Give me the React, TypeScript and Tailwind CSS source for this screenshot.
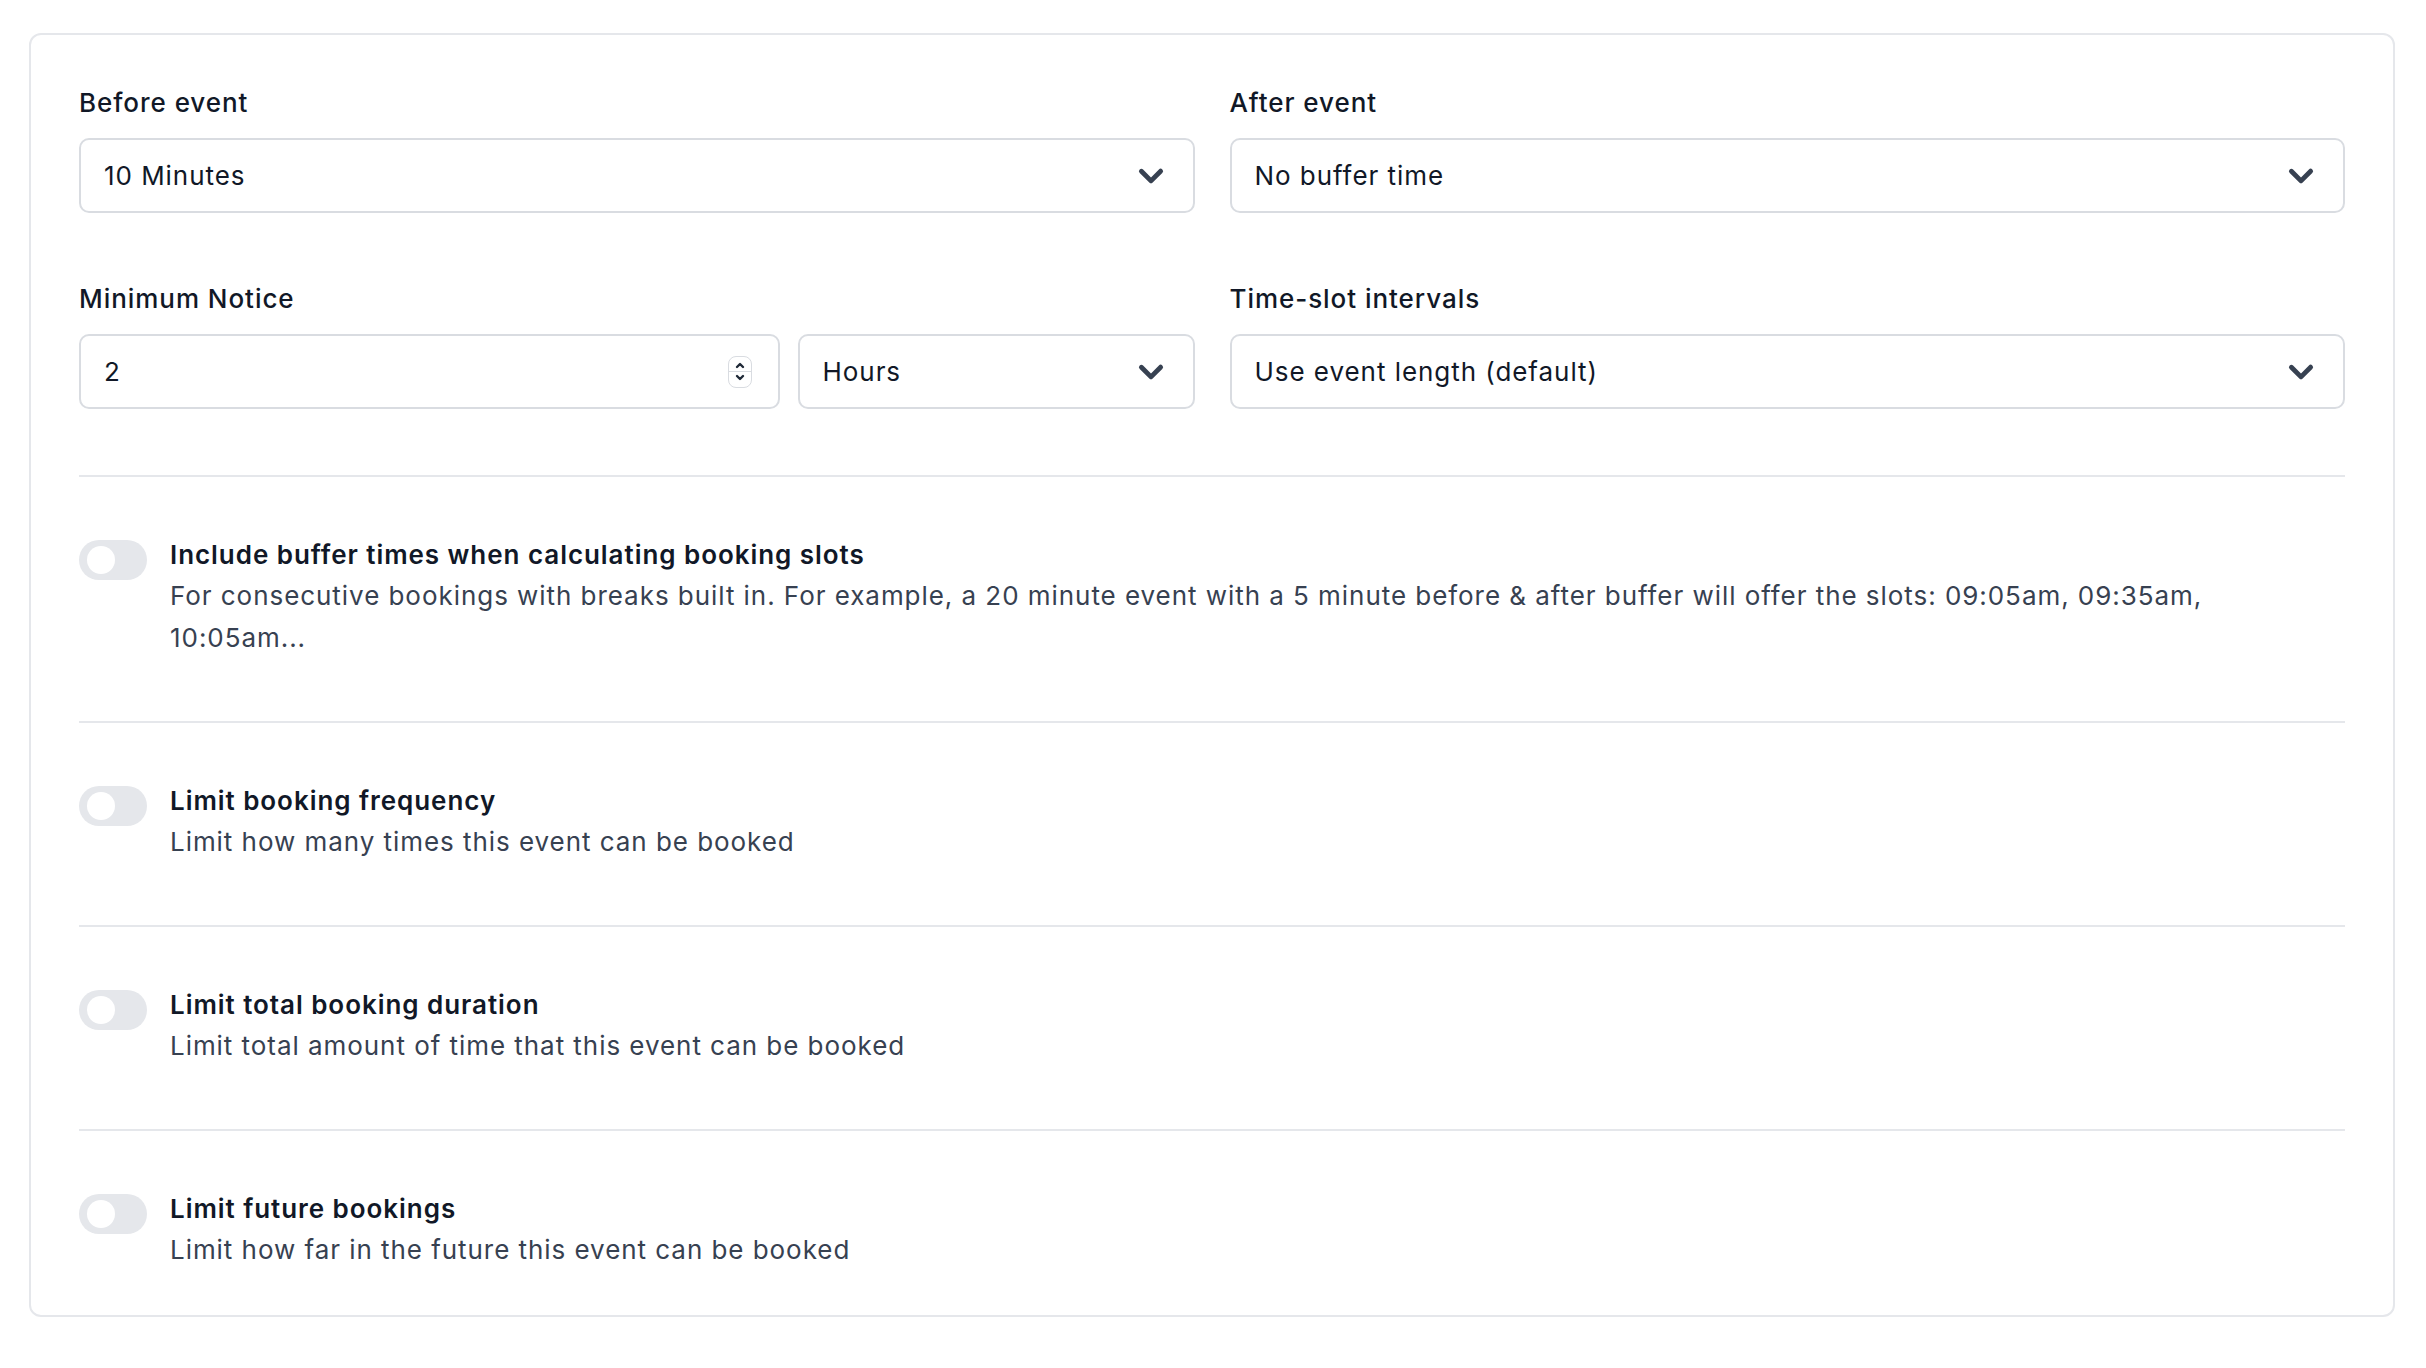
import React from 'react'

const font = { fontFamily: 'Inter, "Noto Sans", sans-serif' }

function Chevron() {
  return (
    <svg width="48" height="48" viewBox="0 0 20 20" fill="#374151" className="shrink-0">
      <path
        fillRule="evenodd"
        d="M5.293 7.293a1 1 0 011.414 0L10 10.586l3.293-3.293a1 1 0 111.414 1.414l-4 4a1 1 0 01-1.414 0l-4-4a1 1 0 010-1.414z"
        clipRule="evenodd"
      />
    </svg>
  )
}

function Select({ value, className = '' }: { value: string; className?: string }) {
  return (
    <div
      className={`flex h-[75px] items-center justify-between rounded-[10px] border-2 border-[#d9dce1] bg-white pl-[23px] pr-[18px] ${className}`}
    >
      <span className="text-[26px] text-[#111827]">{value}</span>
      <Chevron />
    </div>
  )
}

function Spinner() {
  return (
    <div className="flex h-[32px] w-[24px] flex-col items-center justify-center rounded-[8px] border border-[#d9dce1] bg-white">
      <svg width="12" height="12" viewBox="0 0 12 12" fill="none" stroke="#1f2937" strokeWidth="2.4" strokeLinecap="round" strokeLinejoin="round">
        <path d="M3 8l3-3 3 3" />
      </svg>
      <div className="h-px w-full bg-[#d9dce1]" />
      <svg width="12" height="12" viewBox="0 0 12 12" fill="none" stroke="#1f2937" strokeWidth="2.4" strokeLinecap="round" strokeLinejoin="round">
        <path d="M3 4l3 3 3-3" />
      </svg>
    </div>
  )
}

function Field({ label, children }: { label: string; children: React.ReactNode }) {
  return (
    <div className="flex flex-col">
      <label className="mb-[20px] text-[26px] font-medium leading-[31px] text-[#111827]">{label}</label>
      {children}
    </div>
  )
}

function Toggle() {
  return (
    <div className="mt-[6px] flex h-[40px] w-[68px] shrink-0 items-center rounded-full bg-[#e5e7eb] pl-[8px]">
      <div className="h-[28px] w-[28px] rounded-full bg-white" />
    </div>
  )
}

function ToggleRow({ title, desc, last = false }: { title: string; desc: React.ReactNode; last?: boolean }) {
  return (
    <div className={`flex gap-[23px] border-t-2 border-[#e5e7eb] pt-[57px] ${last ? 'pb-[44px]' : 'pb-[62px]'}`}>
      <Toggle />
      <div className="flex flex-col">
        <div className="text-[26px] font-semibold leading-[41px] text-[#111827]">{title}</div>
        <div className="text-[26px] leading-[42px] text-[#374151]">{desc}</div>
      </div>
    </div>
  )
}

export default function App() {
  return (
    <div className="min-h-screen bg-white pl-[29px] pr-[31px] pt-[33px] tracking-[0.95px]" style={font}>
      <div className="rounded-[12px] border-2 border-[#e5e7eb] bg-white px-[48px] pt-[52px]">
        <div className="grid grid-cols-2 gap-x-[35px] gap-y-[70px]">
          <Field label="Before event">
            <Select value="10 Minutes" />
          </Field>
          <Field label="After event">
            <Select value="No buffer time" />
          </Field>
          <Field label="Minimum Notice">
            <div className="flex gap-[18px]">
              <div className="flex h-[75px] flex-1 items-center justify-between rounded-[10px] border-2 border-[#d9dce1] bg-white pl-[23px] pr-[26px]">
                <span className="text-[26px] text-[#111827]">2</span>
                <Spinner />
              </div>
              <Select value="Hours" className="w-[397px]" />
            </div>
          </Field>
          <Field label="Time-slot intervals">
            <Select value="Use event length (default)" />
          </Field>
        </div>

        <div className="mt-[66px]">
          <ToggleRow
            title="Include buffer times when calculating booking slots"
            desc={
              <>
                For consecutive bookings with breaks built in. For example, a 20 minute event with a 5 minute before &amp; after buffer will offer the slots: 09:05am, 09:35am,
                <br />
                10:05am...
              </>
            }
          />
          <ToggleRow title="Limit booking frequency" desc="Limit how many times this event can be booked" />
          <ToggleRow title="Limit total booking duration" desc="Limit total amount of time that this event can be booked" />
          <ToggleRow title="Limit future bookings" desc="Limit how far in the future this event can be booked" last />
        </div>
      </div>
    </div>
  )
}
